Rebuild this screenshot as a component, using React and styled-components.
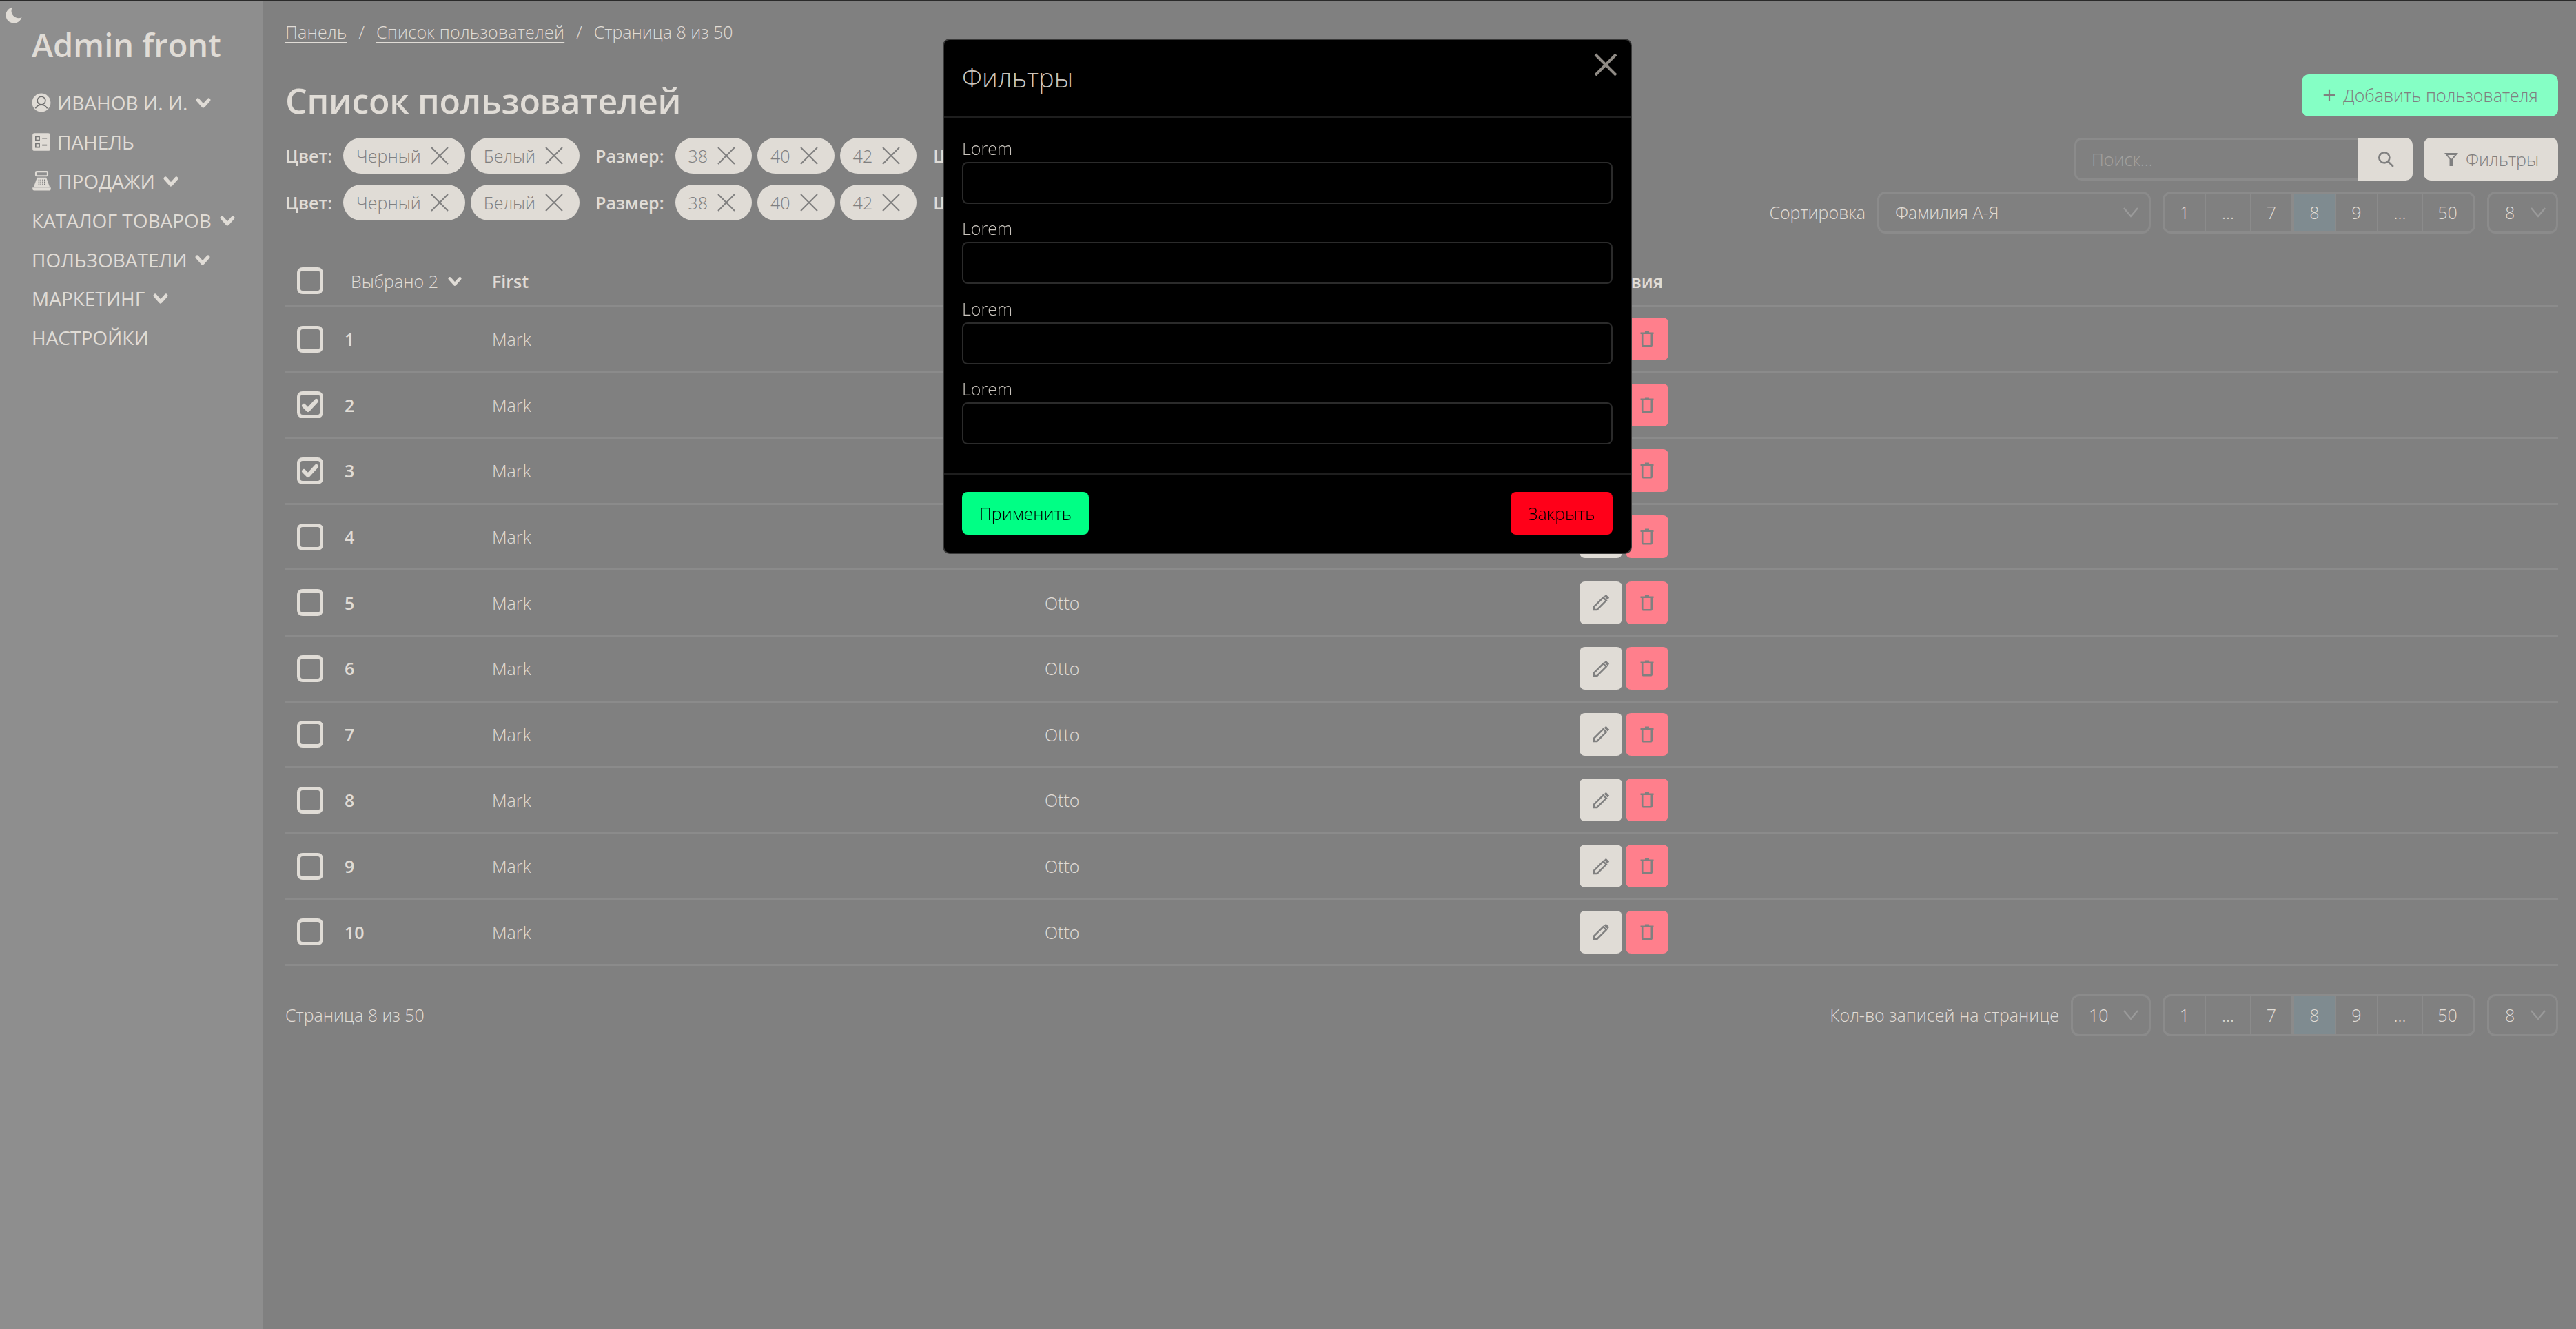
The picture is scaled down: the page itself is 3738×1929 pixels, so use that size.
import styled, { createGlobalStyle } from "styled-components";

const ink = "#e0dcd6";
const grey = "#808080";
const line = "#8b8b8b";

const Global = createGlobalStyle`
  html, body { margin: 0; padding: 0; background: ${grey}; }
  body {
    font-family: "Open Sans", "Noto Sans", sans-serif;
    font-weight: 300;
    font-size: 25px;
    color: ${ink};
  }
  * { box-sizing: border-box; }
`;

const TopLine = styled.div`
  height: 2px;
  background: #2a2a2a;
`;

const Page = styled.div`
  display: flex;
  min-height: 1927px;
`;

const Sidebar = styled.aside`
  width: 382px;
  flex: none;
  background: #8e8e8e;
  padding: 8px 0 0 8px;
`;

const Moon = styled.svg`
  display: block;
  width: 24px;
  height: 24px;
  fill: ${ink};
`;

const Brand = styled.div`
  margin: 2px 0 27px 38px;
  font-size: 47px;
  line-height: 58px;
  font-weight: 600;
`;

const Menu = styled.nav`
  display: flex;
  flex-direction: column;
  margin-left: 38px;
`;

const MenuItem = styled.a`
  height: 56.8px;
  display: flex;
  align-items: center;
  gap: 9px;
  font-size: 28px;
  font-weight: 400;
  svg { flex: none; }
`;

const Chevron = styled.svg`
  width: ${(p) => p.$size || 24}px;
  height: ${(p) => p.$size || 24}px;
  margin-left: ${(p) => p.$gap ?? 2}px;
  fill: none;
  stroke: ${ink};
  stroke-width: 5;
  stroke-linecap: round;
  stroke-linejoin: round;
`;

const Main = styled.main`
  flex: 1;
  min-width: 0;
  padding: 26px 26px 0 32px;
`;

const Breadcrumb = styled.div`
  display: flex;
  align-items: center;
  gap: 17px;
  height: 36px;
  font-size: 25px;
  a {
    letter-spacing: 0.25px;
    text-decoration: underline;
    text-underline-offset: 5px;
    text-decoration-thickness: 2px;
  }
`;

const Head = styled.header`
  display: flex;
  justify-content: space-between;
  margin-top: 44px;
  height: 231px;
`;

const Title = styled.h1`
  margin: 8px 0 24px;
  font-size: 50px;
  line-height: 60px;
  font-weight: 600;
  letter-spacing: -0.3px;
`;

const ChipRow = styled.div`
  display: flex;
  align-items: center;
  height: 52px;
  margin-bottom: 16px;
  white-space: nowrap;
`;

const ChipLabel = styled.span`
  font-weight: 600;
  font-size: 25px;
  margin: 0 16px 0 ${(p) => p.$offset || 0}px;
`;

const Chip = styled.span`
  display: inline-flex;
  align-items: center;
  gap: 14px;
  height: 52px;
  padding: 0 24px 0 19px;
  margin-right: 8px;
  border-radius: 26px;
  background: ${ink};
  color: ${grey};
  font-size: 25px;
`;

const CloseIcon = styled.svg`
  width: 26px;
  height: 26px;
  fill: none;
  stroke: ${grey};
  stroke-width: 2;
`;

const Tools = styled.div`
  display: flex;
  flex-direction: column;
  align-items: flex-end;
`;

const AddButton = styled.button`
  display: flex;
  align-items: center;
  justify-content: center;
  gap: 9px;
  width: 372px;
  height: 61px;
  border: 0;
  border-radius: 10px;
  background: #85ffc5;
  color: ${grey};
  font: inherit;
  font-size: 25px;
  white-space: nowrap;
`;

const ToolRow = styled.div`
  display: flex;
  align-items: center;
  margin-top: ${(p) => p.$top}px;
  height: 62px;
`;

const SearchBox = styled.div`
  width: 412px;
  height: 62px;
  border: 3px solid ${line};
  border-right: 0;
  border-radius: 10px 0 0 10px;
  padding-left: 22px;
  display: flex;
  align-items: center;
  color: #a3a19e;
`;

const SearchButton = styled.button`
  width: 79px;
  height: 62px;
  border: 0;
  border-radius: 0 10px 10px 0;
  background: ${ink};
  display: flex;
  align-items: center;
  justify-content: center;
`;

const LightButton = styled.button`
  display: flex;
  align-items: center;
  justify-content: center;
  gap: 9px;
  width: 195px;
  height: 62px;
  margin-left: 16px;
  border: 0;
  border-radius: 10px;
  background: ${ink};
  color: ${grey};
  font: inherit;
`;

const Caption = styled.span`
  margin-right: 17px;
  white-space: nowrap;
`;

const Select = styled.div`
  width: ${(p) => p.$w}px;
  height: 61px;
  margin-left: ${(p) => p.$gap || 0}px;
  display: flex;
  align-items: center;
  justify-content: space-between;
  padding: 0 14px 0 23px;
  border: 3px solid ${line};
  border-radius: 12px;
  svg { width: 24px; height: 24px; fill: none; stroke: #9a9a9a; stroke-width: 2.4; }
`;

const Pagination = styled.div`
  display: flex;
  height: 61px;
  margin-left: 17px;
  border: 3px solid ${line};
  border-radius: 12px;
  overflow: hidden;
`;

const PageCell = styled.span`
  width: ${(p) => p.$w}px;
  display: flex;
  align-items: center;
  justify-content: center;
  background: ${(p) => (p.$active ? "#7f8b90" : "transparent")};
  border-right: 2px solid ${(p) => (p.$last ? "transparent" : line)};
  border-left: ${(p) => (p.$active ? `2px solid ${line}` : "0")};
`;

const Table = styled.div`
  margin-top: 31px;
`;

const Row = styled.div`
  display: grid;
  grid-template-columns: 69px 214px 802px 776px 1fr;
  align-items: center;
  height: ${(p) => (p.$head ? 76 : 95.6)}px;
  padding-top: ${(p) => (p.$head ? 2 : 0)}px;
  border-bottom: 3px solid ${line};
  padding-left: 17px;
`;

const HeadCell = styled.span`
  font-weight: 600;
  font-size: 25px;
`;

const SelectedCell = styled.span`
  display: flex;
  align-items: center;
  margin-left: 9px;
  font-size: 25px;
  white-space: nowrap;
`;

const Num = styled.span`
  font-weight: 600;
`;

const Check = styled.span`
  width: 38px;
  height: 39px;
  border: 5px solid ${ink};
  border-radius: 8px;
  display: flex;
  align-items: center;
  justify-content: center;
  svg { width: 26px; height: 22px; fill: none; stroke: ${ink}; stroke-width: 6; stroke-linecap: round; stroke-linejoin: round; }
`;

const Actions = styled.div`
  display: flex;
  gap: 5px;
`;

const IconButton = styled.button`
  width: 62px;
  height: 62px;
  padding: 0;
  border: 0;
  border-radius: 8px;
  background: ${(p) => (p.$danger ? "#ff7f8c" : ink)};
  display: flex;
  align-items: center;
  justify-content: center;
`;

const Footer = styled.footer`
  display: flex;
  align-items: center;
  justify-content: space-between;
  margin-top: 41px;
  height: 61px;
`;

const FooterRight = styled.div`
  display: flex;
  align-items: center;
`;

const Modal = styled.div`
  position: fixed;
  top: 56px;
  left: 1368px;
  width: 1000px;
  height: 748px;
  background: #000;
  border: 2px solid #3a3a3a;
  border-radius: 10px;
  display: flex;
  flex-direction: column;
`;

const ModalHead = styled.div`
  height: 113px;
  flex: none;
  padding: 26px 26px 0;
  border-bottom: 2px solid #1e1e1e;
  display: flex;
  justify-content: space-between;
  align-items: flex-start;
`;

const ModalTitle = styled.div`
  font-size: 38px;
  line-height: 56px;
  color: #c9c4bd;
`;

const ModalClose = styled.svg`
  width: 36px;
  height: 36px;
  margin: -8px -8px 0 0;
  fill: none;
  stroke: #8f8a84;
  stroke-width: 4;
`;

const ModalBody = styled.div`
  flex: 1;
  padding: 28px 26px 0;
`;

const Field = styled.div`
  height: 116.3px;
`;

const FieldLabel = styled.div`
  height: 36px;
  font-size: 25px;
  line-height: 32px;
  color: #c9c4bd;
`;

const FieldInput = styled.div`
  height: 61px;
  border: 2px solid #2b2b2b;
  border-radius: 8px;
`;

const ModalFoot = styled.div`
  height: 115px;
  flex: none;
  padding: 25px 26px 0;
  border-top: 2px solid #1e1e1e;
  display: flex;
  justify-content: space-between;
  align-items: flex-start;
`;

const ModalButton = styled.button`
  width: ${(p) => p.$w}px;
  height: 62px;
  border: 0;
  border-radius: 8px;
  background: ${(p) => p.$bg};
  color: #000;
  font: inherit;
  font-size: 25px;
  font-weight: 300;
`;

const Svg = ({ size = 26, children, ...rest }) => (
  <svg width={size} height={size} viewBox="0 0 24 24" {...rest}>
    {children}
  </svg>
);

const Down = ({ size, gap }) => (
  <Chevron $size={size} $gap={gap} viewBox="0 0 24 24">
    <path d="M4 8l8 9 8-9" />
  </Chevron>
);

const Thin = () => (
  <svg viewBox="0 0 24 24">
    <path d="M2 6l10 12L22 6" />
  </svg>
);

const Cross = () => (
  <CloseIcon viewBox="0 0 26 26">
    <path d="M1 1l24 24M25 1L1 25" />
  </CloseIcon>
);

const PersonIcon = () => (
  <Svg size={28}>
    <circle cx="12" cy="12" r="11.5" fill={ink} />
    <circle cx="12" cy="9.5" r="5" fill={ink} stroke="#6f6f6f" strokeWidth="1.4" />
    <path d="M4.6 19.2c1.5-3 4.2-4.4 7.4-4.4s5.900 1.400 7.400 4.400" fill="none" stroke="#6f6f6f" strokeWidth="1.400" />
  </Svg>
);

const PanelIcon = () => (
  <Svg size={28}>
    <rect x="1" y="1" width="22" height="22" rx="2.500" fill={ink} />
    <path d="M5 5.500h4.500v4.500H5zM5 14h4.500v4.500H5zM13 7.500h6M13 16h6" fill="none" stroke="#777" strokeWidth="1.400" />
  </Svg>
);

const RegisterIcon = () => (
  <Svg size={29}>
    <path d="M6 1h12a1 1 0 011 1v3a1 1 0 01-1 1H6a1 1 0 01-1-1V2a1 1 0 011-1z" fill="none" stroke={ink} strokeWidth="1.800" />
    <path d="M6.500 8h11l4 11H2.500zM1 20h22v2a1.500 1.500 0 01-1.500 1.500h-19A1.500 1.500 0 011 22z" fill={ink} />
    <path d="M8 11h8M8 13.500h8M8 16h8" stroke="#808080" strokeWidth="1.200" strokeDasharray="1.300 1" />
  </Svg>
);

const PencilIcon = () => (
  <Svg size={25}>
    <path d="M2 22v-4.200L14.800 5l4.200 4.200L6.200 22z" fill="none" stroke={grey} strokeWidth="2.400" />
    <path d="M16.800 3.300L18.600 1.500 22.500 5.400 20.700 7.200z" fill={grey} stroke={grey} />
  </Svg>
);

const TrashIcon = () => (
  <Svg size={24}>
    <path d="M2.500 3.800h19M9 1.800h6" fill="none" stroke={grey} strokeWidth="2.400" />
    <path d="M5.200 5v15.500A1.800 1.800 0 007 22.300h10a1.800 1.800 0 001.800-1.800V5" fill="none" stroke={grey} strokeWidth="2.600" />
  </Svg>
);

const chipGroups = [
  { label: "Цвет:", items: ["Черный", "Белый"] },
  { label: "Размер:", items: ["38", "40", "42"], offset: 15 },
  { label: "Ширина:", items: ["10", "20"], offset: 16 },
];

const Chips = () => (
  <ChipRow>
    {chipGroups.map((g) => (
      <span key={g.label} style={{ display: "contents" }}>
        <ChipLabel $offset={g.offset}>{g.label}</ChipLabel>
        {g.items.map((item) => (
          <Chip key={item}>
            {item}
            <Cross />
          </Chip>
        ))}
      </span>
    ))}
  </ChipRow>
);

const pageCells = [
  ["1", 60],
  ["...", 66],
  ["7", 60],
  ["8", 63, true],
  ["9", 61],
  ["...", 65],
  ["50", 73],
];

const Pager = () => (
  <Pagination>
    {pageCells.map(([text, w, active], i) => (
      <PageCell key={i} $w={w} $active={active} $last={i === pageCells.length - 1}>
        {text}
      </PageCell>
    ))}
  </Pagination>
);

const rows = [1, 2, 3, 4, 5, 6, 7, 8, 9, 10];
const checked = [2, 3];

const Box = ({ on }) => (
  <Check>
    {on && (
      <svg viewBox="0 0 26 22">
        <path d="M4 12l6 6L22 5" />
      </svg>
    )}
  </Check>
);

export default function App() {
  return (
    <>
      <Global />
      <TopLine />
      <Page>
        <Sidebar>
          <Moon viewBox="0 0 24 24">
            <path d="M10 0.500C5 1.500 0.500 6 0.500 12c0 6.500 5 11.500 11.500 11.500 5.500 0 10-3.500 11.500-8.500-1.500.8-3 1.200-4.500 1.200C13 16.200 8.500 11 8.500 6c0-2 .5-3.800 1.500-5.500z" />
          </Moon>
          <Brand>Admin front</Brand>
          <Menu>
            <MenuItem><PersonIcon />ИВАНОВ И. И.<Down /></MenuItem>
            <MenuItem><PanelIcon />ПАНЕЛЬ</MenuItem>
            <MenuItem><RegisterIcon />ПРОДАЖИ<Down /></MenuItem>
            <MenuItem>КАТАЛОГ ТОВАРОВ<Down /></MenuItem>
            <MenuItem>ПОЛЬЗОВАТЕЛИ<Down /></MenuItem>
            <MenuItem>МАРКЕТИНГ<Down /></MenuItem>
            <MenuItem>НАСТРОЙКИ</MenuItem>
          </Menu>
        </Sidebar>
        <Main>
          <Breadcrumb>
            <a>Панель</a>
            <span>/</span>
            <a>Список пользователей</a>
            <span>/</span>
            <span>Страница 8 из 50</span>
          </Breadcrumb>
          <Head>
            <div>
              <Title>Список пользователей</Title>
              <Chips />
              <Chips />
            </div>
            <Tools>
              <AddButton>
                <Svg size={22}>
                  <path d="M12 3v18M3 12h18" stroke={grey} strokeWidth="2.400" />
                </Svg>
                Добавить пользователя
              </AddButton>
              <ToolRow $top={31}>
                <SearchBox>Поиск...</SearchBox>
                <SearchButton>
                  <Svg size={26}>
                    <circle cx="10" cy="10" r="7" fill="none" stroke={grey} strokeWidth="2.400" />
                    <path d="M15 15l7 7" stroke={grey} strokeWidth="2.400" />
                  </Svg>
                </SearchButton>
                <LightButton>
                  <Svg size={24}>
                    <path d="M2 3h20l-7.500 9v10h-5V12zM7 6l5 6 5-6z" fill={grey} fillRule="evenodd" />
                  </Svg>
                  Фильтры
                </LightButton>
              </ToolRow>
              <ToolRow $top={16}>
                <Caption>Сортировка</Caption>
                <Select $w={397}>
                  Фамилия А-Я
                  <Thin />
                </Select>
                <Pager />
                <Select $w={103} $gap={17}>
                  8
                  <Thin />
                </Select>
              </ToolRow>
            </Tools>
          </Head>
          <Table>
            <Row $head>
              <Box />
              <SelectedCell>Выбрано 2<Down size={22} gap={13} /></SelectedCell>
              <HeadCell>First</HeadCell>
              <HeadCell>Last</HeadCell>
              <HeadCell>Действия</HeadCell>
            </Row>
            {rows.map((n) => (
              <Row key={n}>
                <Box on={checked.includes(n)} />
                <Num>{n}</Num>
                <span>Mark</span>
                <span>Otto</span>
                <Actions>
                  <IconButton><PencilIcon /></IconButton>
                  <IconButton $danger><TrashIcon /></IconButton>
                </Actions>
              </Row>
            ))}
          </Table>
          <Footer>
            <span>Страница 8 из 50</span>
            <FooterRight>
              <Caption>Кол-во записей на странице</Caption>
              <Select $w={116}>
                10
                <Thin />
              </Select>
              <Pager />
              <Select $w={103} $gap={17}>
                8
                <Thin />
              </Select>
            </FooterRight>
          </Footer>
        </Main>
      </Page>
      <Modal>
        <ModalHead>
          <ModalTitle>Фильтры</ModalTitle>
          <ModalClose viewBox="0 0 36 36">
            <path d="M3 3l30 30M33 3L3 33" />
          </ModalClose>
        </ModalHead>
        <ModalBody>
          {[1, 2, 3, 4].map((n) => (
            <Field key={n}>
              <FieldLabel>Lorem</FieldLabel>
              <FieldInput />
            </Field>
          ))}
        </ModalBody>
        <ModalFoot>
          <ModalButton $w={184} $bg="#00ff85">Применить</ModalButton>
          <ModalButton $w={148} $bg="#ff0019">Закрыть</ModalButton>
        </ModalFoot>
      </Modal>
    </>
  );
}
